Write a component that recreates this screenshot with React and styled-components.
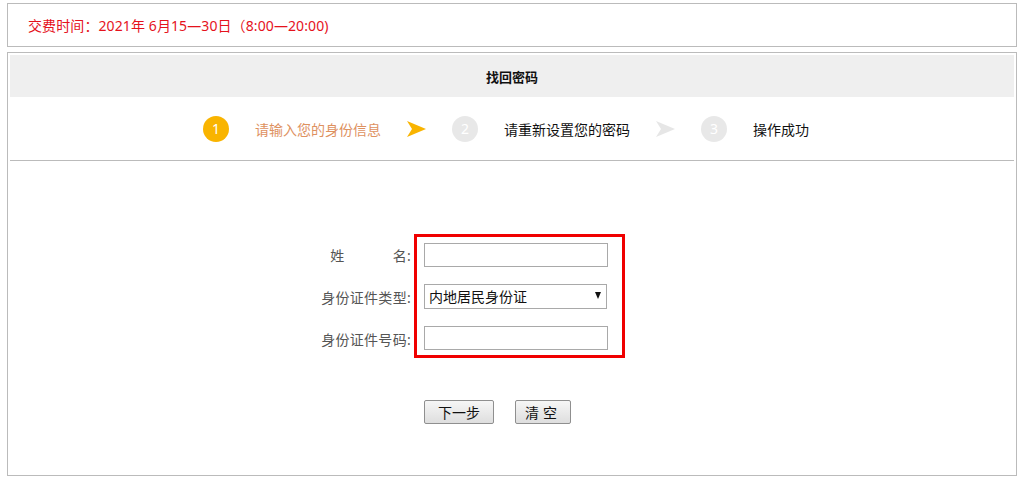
import React from "react";
import styled, { createGlobalStyle } from "styled-components";

const GlobalStyle = createGlobalStyle`
  body {
    margin: 0;
    background: #fff;
    font-family: "Noto Sans", "Noto Sans CJK SC", sans-serif;
    font-size: 14px;
    color: #333;
  }
`

const Page = styled.div`
  width: 1010px;
  padding: 3px 0 0 7px;
  display: flex;
  flex-direction: column;
  gap: 5px;
`

const Notice = styled.div`
  height: 42px;
  border: 1px solid #bbb;
  display: flex;
  align-items: center;
  padding-left: 20px;
  color: #e5121c;
  font-size: 14px;
  letter-spacing: 0.1px;
`

const Panel = styled.div`
  height: 418px;
  border: 1px solid #bbb;
  padding: 2px;
  display: flex;
  flex-direction: column;
`

const PanelTitle = styled.div`
  height: 42px;
  background: #efefef;
  display: flex;
  align-items: center;
  justify-content: center;
  font-size: 13px;
  font-weight: bold;
  color: #111;
`

const Steps = styled.div`
  height: 63px;
  border-bottom: 1px solid #bbb;
  display: flex;
  align-items: center;
  justify-content: center;
  gap: 26px;
  padding-right: 12px;
`

const StepDot = styled.span`
  width: 26px;
  height: 26px;
  border-radius: 50%;
  background: ${(p) => (p.$active ? "#f9b400" : "#e8e8e8")};
  color: #fff;
  font-size: 14px;
  display: flex;
  align-items: center;
  justify-content: center;
`

const StepLabel = styled.span`
  font-size: 14px;
  color: ${(p) => (p.$active ? "#de915f" : "#111")};
`

const Form = styled.div`
  display: grid;
  grid-template-columns: 404px auto;
  margin-top: 73px;
  row-gap: 42px;
`

const Labels = styled.div`
  display: flex;
  flex-direction: column;
  align-items: flex-end;
  padding: 9px 3px 0 0;
  gap: 17px;
`

const Label = styled.div`
  height: 24px;
  display: flex;
  align-items: center;
  color: #555;
  font-size: 14px;
  letter-spacing: 0.3px;
  &:nth-child(2) {
    height: 25px;
  }
  &:nth-child(3) {
    margin-top: 1px;
  }
`

const Gap = styled.span`
  margin-right: 48px;
`

const Fields = styled.div`
  width: 184px;
  border: 3px solid #f00000;
  padding: 6px 14px 5px 7px;
  display: flex;
  flex-direction: column;
  gap: 17px;
`

const Input = styled.input`
  box-sizing: border-box;
  width: 184px;
  height: 24px;
  margin: 0;
  border: 1px solid #a9a9a9;
  padding: 2px 4px;
  font: inherit;
  outline: none;
  & + & {
    margin-top: 1px;
  }
`

const SelectWrap = styled.div`
  position: relative;
  width: 183px;
  height: 25px;
`

const Select = styled.select`
  appearance: none;
  box-sizing: border-box;
  width: 100%;
  height: 100%;
  margin: 0;
  border: 1px solid #a9a9a9;
  background: #fff;
  padding: 0 4px;
  font: inherit;
  font-size: 14px;
  color: #111;
  outline: none;
`

const Caret = styled.span`
  position: absolute;
  right: 6px;
  top: 8px;
  width: 0;
  height: 0;
  border-left: 3.5px solid transparent;
  border-right: 3.5px solid transparent;
  border-top: 7px solid #111;
  pointer-events: none;
`

const Buttons = styled.div`
  grid-column: 2;
  display: flex;
  gap: 21px;
  padding-left: 10px;
`

const Button = styled.button`
  box-sizing: border-box;
  width: ${(p) => p.$width}px;
  height: 24px;
  border: 1px solid #8f8f8f;
  border-radius: 2px;
  background: linear-gradient(#f6f6f6, #dedede);
  font: inherit;
  font-size: 14px;
  color: #111;
  padding: 0;
  letter-spacing: ${(p) => p.$spread || 0};
`

const Arrow = ({ color }) => (
  <svg width="19" height="16" viewBox="0 0 19 16">
    <path d="M0 0 L19 8 L0 16 L5 8 Z" fill={color} />
  </svg>
)

const steps = [
  { n: 1, label: "请输入您的身份信息", active: true },
  { n: 2, label: "请重新设置您的密码" },
  { n: 3, label: "操作成功" },
]

export default function App() {
  return (
    <>
      <GlobalStyle />
      <Page>
        <Notice>交费时间：2021年 6月15—30日（8:00—20:00)</Notice>
        <Panel>
          <PanelTitle>找回密码</PanelTitle>
          <Steps>
            {steps.map((s, i) => (
              <React.Fragment key={s.n}>
                {i > 0 && <Arrow color={i === 1 ? "#f9b400" : "#e6e6e6"} />}
                <StepDot $active={s.active}>{s.n}</StepDot>
                <StepLabel $active={s.active}>{s.label}</StepLabel>
              </React.Fragment>
            ))}
          </Steps>
          <Form>
            <Labels>
              <Label><Gap>姓</Gap>名:</Label>
              <Label>身份证件类型:</Label>
              <Label>身份证件号码:</Label>
            </Labels>
            <Fields>
              <Input type="text" />
              <SelectWrap>
                <Select defaultValue="1">
                  <option value="1">内地居民身份证</option>
                  <option value="2">港澳居民来往内地通行证</option>
                  <option value="3">台湾居民来往大陆通行证</option>
                  <option value="4">护照</option>
                </Select>
                <Caret />
              </SelectWrap>
              <Input type="text" />
            </Fields>
            <Buttons>
              <Button $width={70}>下一步</Button>
              <Button $width={56} $spread="4px">清空</Button>
            </Buttons>
          </Form>
        </Panel>
      </Page>
    </>
  );
}
